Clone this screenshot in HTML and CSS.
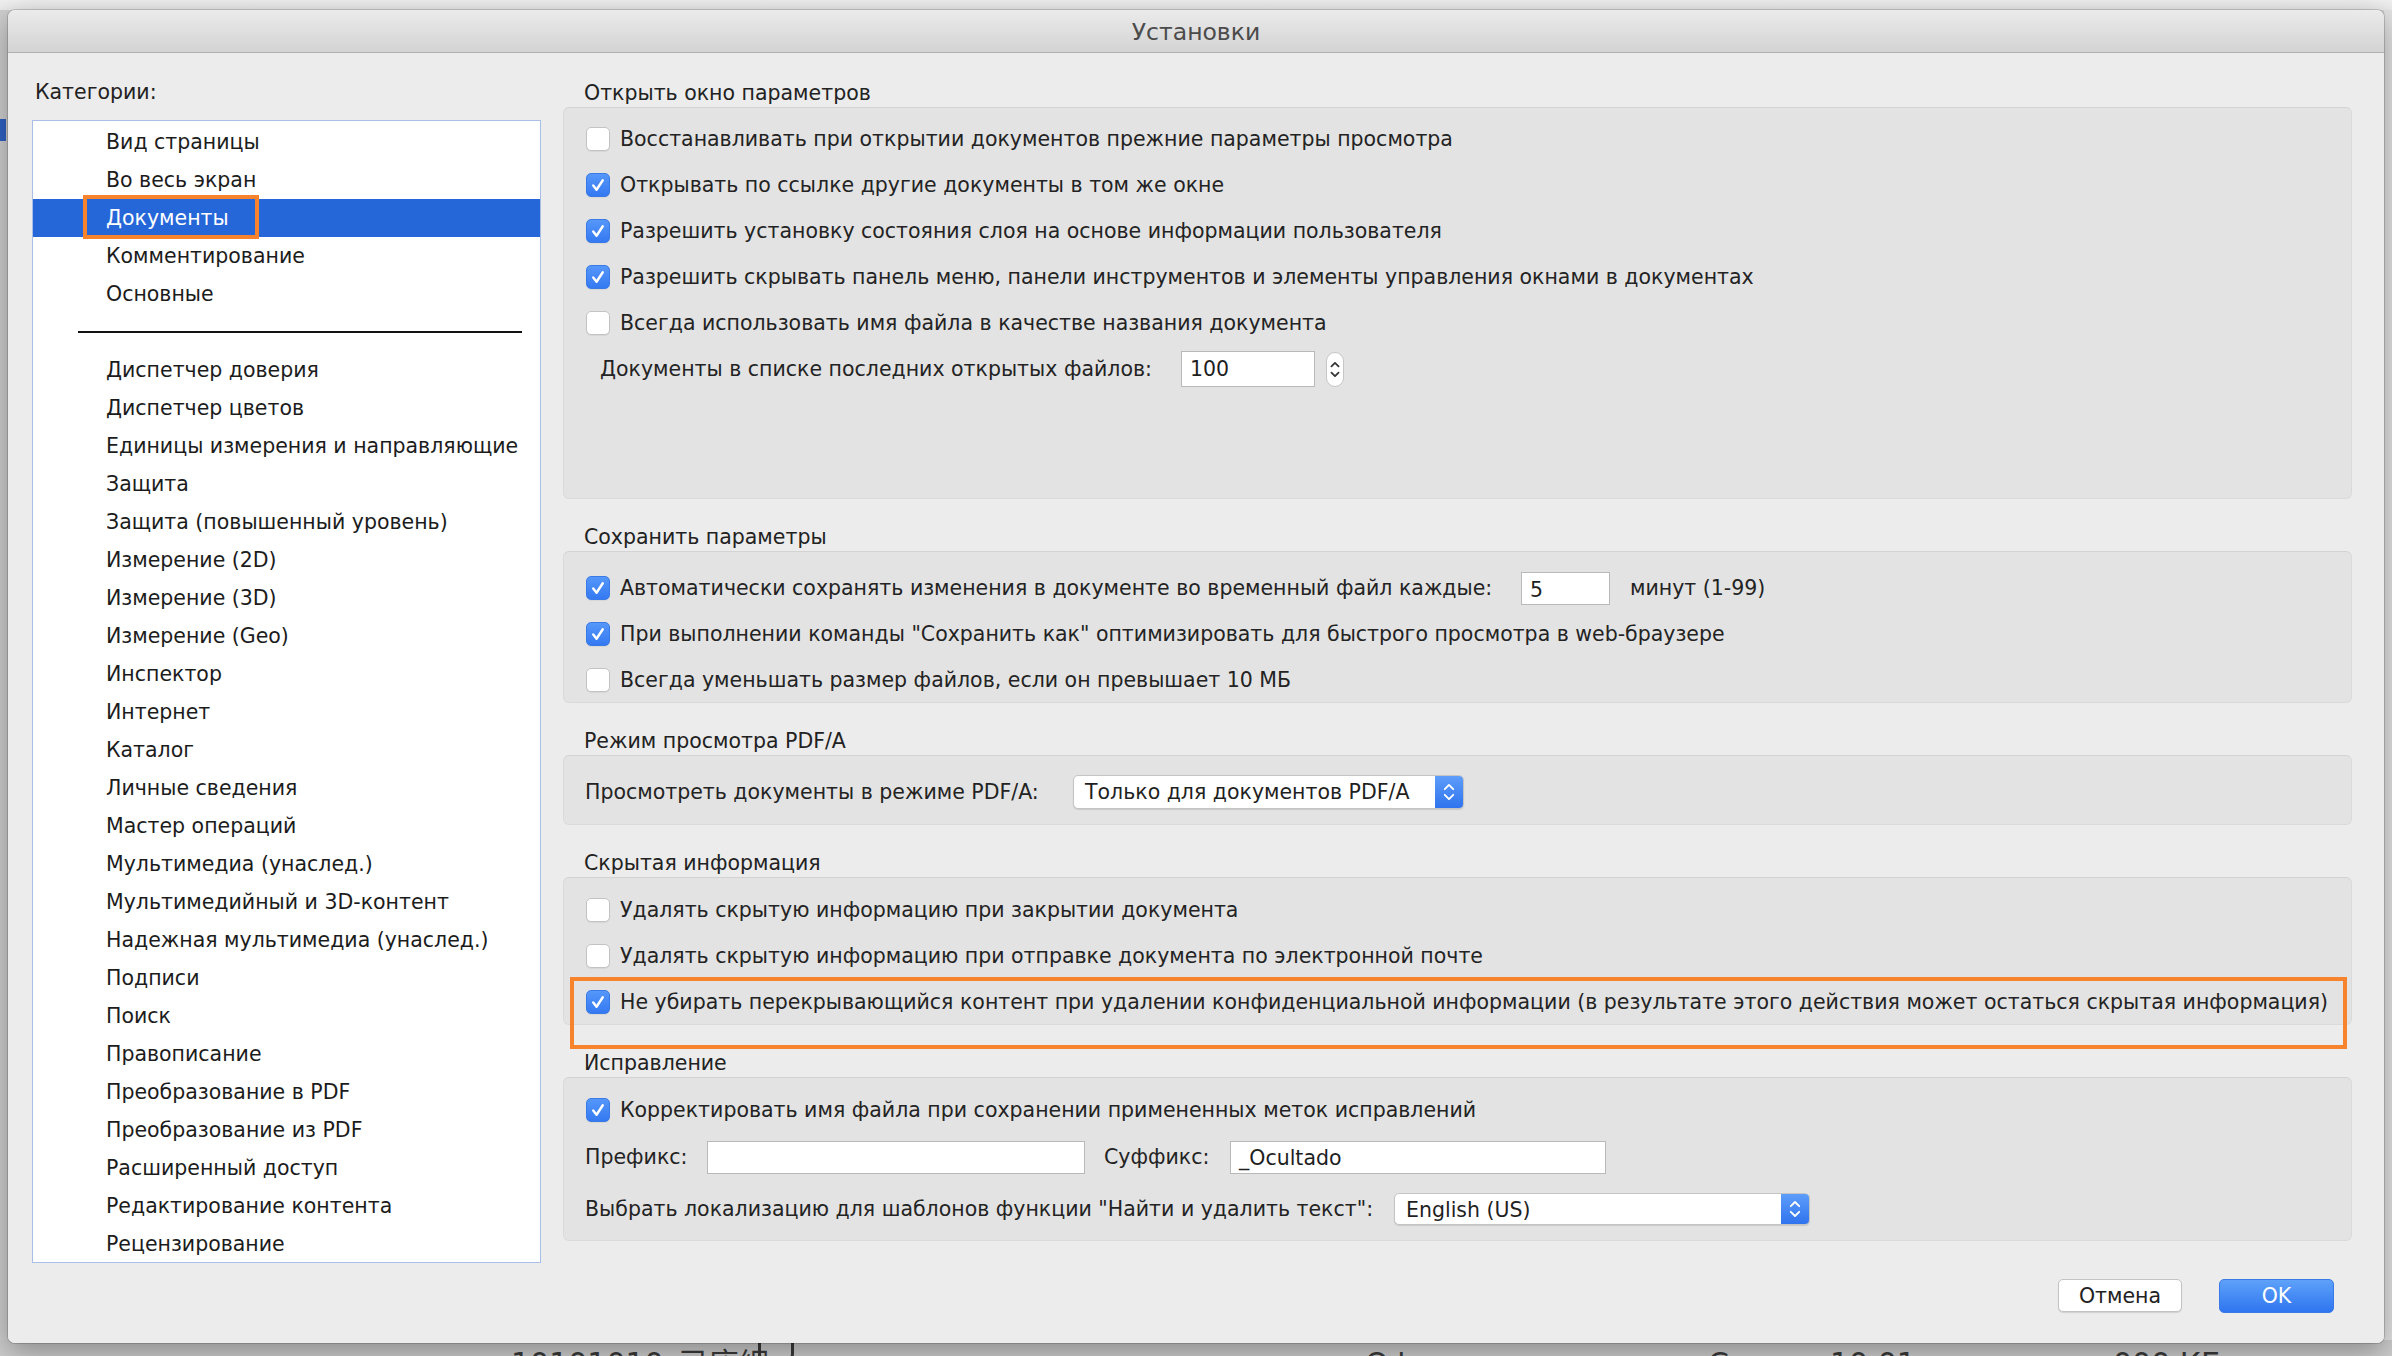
FILE: index.html
```html
<!DOCTYPE html>
<html lang="ru">
<head>
<meta charset="utf-8">
<title>Установки</title>
<link rel="stylesheet" href="styles.css">
</head>
<body>
<div class="desktop">
  <div class="bg-left"><span class="bg-chip"></span></div>
  <div class="bg-right"></div>
  <div class="bg-bottom">
    <span class="bg-name">10101010_已座細</span>
    <span class="bg-icon"></span>
    <span class="bg-c1">Оф</span>
    <span class="bg-c2">Сег</span>
    <span class="bg-c3">10.01</span>
    <span class="bg-c4">000 КБ</span>
  </div>

  <div class="dialog">
    <div class="titlebar">Установки</div>
    <div class="content">
      <div class="left">
        <div class="cat-label">Категории:</div>
        <div class="list">
          <div class="item">Вид страницы</div>
          <div class="item">Во весь экран</div>
          <div class="item selected">Документы<span class="hl"></span></div>
          <div class="item">Комментирование</div>
          <div class="item">Основные</div>
          <div class="sep"></div>
          <div class="item">Диспетчер доверия</div>
          <div class="item">Диспетчер цветов</div>
          <div class="item">Единицы измерения и направляющие</div>
          <div class="item">Защита</div>
          <div class="item">Защита (повышенный уровень)</div>
          <div class="item">Измерение (2D)</div>
          <div class="item">Измерение (3D)</div>
          <div class="item">Измерение (Geo)</div>
          <div class="item">Инспектор</div>
          <div class="item">Интернет</div>
          <div class="item">Каталог</div>
          <div class="item">Личные сведения</div>
          <div class="item">Мастер операций</div>
          <div class="item">Мультимедиа (унаслед.)</div>
          <div class="item">Мультимедийный и 3D-контент</div>
          <div class="item">Надежная мультимедиа (унаслед.)</div>
          <div class="item">Подписи</div>
          <div class="item">Поиск</div>
          <div class="item">Правописание</div>
          <div class="item">Преобразование в PDF</div>
          <div class="item">Преобразование из PDF</div>
          <div class="item">Расширенный доступ</div>
          <div class="item">Редактирование контента</div>
          <div class="item">Рецензирование</div>
        </div>
      </div>

      <div class="right">
        <section class="group">
          <div class="gtitle">Открыть окно параметров</div>
          <div class="gbox g1">
            <div class="row"><span class="cb"></span>Восстанавливать при открытии документов прежние параметры просмотра</div>
            <div class="row"><span class="cb on"><svg viewBox="0 0 24 24"><path d="M6.8 12.6l3.6 4.6 6.8-10.4"/></svg></span>Открывать по ссылке другие документы в том же окне</div>
            <div class="row"><span class="cb on"><svg viewBox="0 0 24 24"><path d="M6.8 12.6l3.6 4.6 6.8-10.4"/></svg></span>Разрешить установку состояния слоя на основе информации пользователя</div>
            <div class="row"><span class="cb on"><svg viewBox="0 0 24 24"><path d="M6.8 12.6l3.6 4.6 6.8-10.4"/></svg></span>Разрешить скрывать панель меню, панели инструментов и элементы управления окнами в документах</div>
            <div class="row"><span class="cb"></span>Всегда использовать имя файла в качестве названия документа</div>
            <div class="row row-indent">
              <span class="lbl lbl-recent">Документы в списке последних открытых файлов:</span>
              <span class="field f-recent">100</span>
              <span class="stepper"><svg viewBox="0 0 18 35"><path d="M5 14l4-4 4 4M5 21l4 4 4-4"/></svg></span>
            </div>
          </div>
        </section>

        <section class="group">
          <div class="gtitle">Сохранить параметры</div>
          <div class="gbox g2">
            <div class="row"><span class="cb on"><svg viewBox="0 0 24 24"><path d="M6.8 12.6l3.6 4.6 6.8-10.4"/></svg></span><span class="lbl lbl-auto">Автоматически сохранять изменения в документе во временный файл каждые:</span><span class="field f-min">5</span><span class="after">минут (1-99)</span></div>
            <div class="row"><span class="cb on"><svg viewBox="0 0 24 24"><path d="M6.8 12.6l3.6 4.6 6.8-10.4"/></svg></span>При выполнении команды "Сохранить как" оптимизировать для быстрого просмотра в web-браузере</div>
            <div class="row"><span class="cb"></span>Всегда уменьшать размер файлов, если он превышает 10 МБ</div>
          </div>
        </section>

        <section class="group">
          <div class="gtitle">Режим просмотра PDF/A</div>
          <div class="gbox g3">
            <div class="row row-plain">
              <span class="lbl lbl-pdfa">Просмотреть документы в режиме PDF/A:</span>
              <span class="select s-pdfa"><span class="sel-text">Только для документов PDF/A</span><span class="sel-btn"><svg viewBox="0 0 28 34"><path d="M9.5 14l4.5-4.5 4.5 4.5M9.5 20l4.5 4.5 4.5-4.5"/></svg></span></span>
            </div>
          </div>
        </section>

        <section class="group">
          <div class="gtitle">Скрытая информация</div>
          <div class="gbox g4">
            <div class="row"><span class="cb"></span>Удалять скрытую информацию при закрытии документа</div>
            <div class="row"><span class="cb"></span>Удалять скрытую информацию при отправке документа по электронной почте</div>
            <div class="row"><span class="cb on"><svg viewBox="0 0 24 24"><path d="M6.8 12.6l3.6 4.6 6.8-10.4"/></svg></span>Не убирать перекрывающийся контент при удалении конфиденциальной информации (в результате этого действия может остаться скрытая информация)</div>
          </div>
          <div class="hl-row"></div>
        </section>

        <section class="group">
          <div class="gtitle">Исправление</div>
          <div class="gbox g5">
            <div class="row"><span class="cb on"><svg viewBox="0 0 24 24"><path d="M6.8 12.6l3.6 4.6 6.8-10.4"/></svg></span>Корректировать имя файла при сохранении примененных меток исправлений</div>
            <div class="row row-plain r-fix2">
              <span class="lbl lbl-prefix">Префикс:</span>
              <span class="field f-prefix"></span>
              <span class="lbl lbl-suffix">Суффикс:</span>
              <span class="field f-suffix">_Ocultado</span>
            </div>
            <div class="row row-plain r-fix3">
              <span class="lbl lbl-loc">Выбрать локализацию для шаблонов функции "Найти и удалить текст":</span>
              <span class="select s-loc"><span class="sel-text">English (US)</span><span class="sel-btn"><svg viewBox="0 0 28 32"><path d="M9.5 13l4.5-4.5 4.5 4.5M9.5 19l4.5 4.5 4.5-4.5"/></svg></span></span>
            </div>
          </div>
        </section>

        <div class="buttons">
          <button class="btn btn-cancel" type="button">Отмена</button>
          <button class="btn btn-ok" type="button">OK</button>
        </div>
      </div>
    </div>
  </div>
</div>
</body>
</html>
```

FILE: styles.css
```css
* { box-sizing: border-box; }
html, body { margin: 0; padding: 0; }
body {
  width: 2392px;
  height: 1356px;
  overflow: hidden;
  font-family: "DejaVu Sans", "Liberation Sans", sans-serif;
  color: #222;
}

.desktop {
  position: relative;
  width: 2392px;
  height: 1356px;
  background: linear-gradient(#f1f1f1 0, #ebebeb 10px, #d4d4d4 10px);
  overflow: hidden;
}

/* background application peeking around the dialog */
.bg-left {
  position: absolute;
  left: 0; top: 10px;
  width: 8px; height: 1340px;
  background: #cfcfcf;
}
.bg-chip {
  position: absolute;
  left: 0; top: 109px;
  width: 6px; height: 22px;
  background: #2f62c4;
}
.bg-right {
  position: absolute;
  right: 0; top: 10px;
  width: 8px; height: 1340px;
  background: #e4e4e4;
}
.bg-bottom {
  position: absolute;
  left: 0; top: 1340px;
  width: 2392px; height: 16px;
  background: #cdcdcd;
  font-family: "DejaVu Sans", "Noto Sans CJK SC", sans-serif;
  font-size: 30px;
  color: #3a3a3a;
  line-height: 40px;
}
.bg-bottom span { position: absolute; top: 4px; }
.bg-name { left: 511px; }
.bg-icon {
  left: 758px; width: 36px; height: 24px;
  border: 3px solid #3a3a3a; border-radius: 6px;
  top: -4px !important;
}
.bg-c1 { left: 1365px; }
.bg-c2 { left: 1708px; }
.bg-c3 { left: 1830px; }
.bg-c4 { left: 2113px; }

/* dialog window */
.dialog {
  position: absolute;
  left: 8px; top: 10px;
  width: 2376px; height: 1333px;
  border-radius: 7px;
  background: #ececec;
  box-shadow: 0 0 0 1px rgba(0,0,0,0.16), 0 8px 30px rgba(0,0,0,0.35);
  overflow: hidden;
}
.titlebar {
  height: 43px;
  line-height: 44px;
  text-align: center;
  font-size: 23.5px;
  color: #4b4b4b;
  background: linear-gradient(#ebebeb, #d3d3d3);
  border-bottom: 1px solid #b0b0b0;
}
.content {
  display: flex;
  height: 1290px;
  background: #ececec;
}

/* categories */
.left {
  width: 533px;
  padding: 26px 0 0 24px;
  flex: none;
}
.cat-label {
  height: 26px;
  line-height: 26px;
  font-size: 20.5px;
  padding-left: 3px;
  margin-bottom: 15px;
  color: #222;
}
.list {
  width: 509px;
  height: 1143px;
  background: #fff;
  border: 1px solid #a9bfe7;
  padding-top: 2px;
}
.item {
  position: relative;
  height: 38px;
  line-height: 38px;
  padding-left: 73px;
  font-size: 20.5px;
  color: #1c1c1c;
  white-space: nowrap;
}
.item.selected {
  background: #2566d9;
  color: #fff;
}
.hl {
  position: absolute;
  left: 50px; top: -4px;
  width: 176px; height: 44px;
  border: 4px solid #f7842c;
}
.sep {
  position: relative;
  height: 38px;
}
.sep::before {
  content: "";
  position: absolute;
  left: 45px; top: 18px;
  width: 444px; height: 2px;
  background: #111;
}

/* right panel */
.right {
  width: 1789px;
  margin-left: 22px;
  padding-top: 27px;
  flex: none;
}
.group {
  position: relative;
  margin-bottom: 25px;
}
.gtitle {
  height: 26px;
  line-height: 26px;
  padding-left: 21px;
  font-size: 20.5px;
  color: #222;
}
.gbox {
  margin-top: 1px;
  background: #e3e3e3;
  border: 1px solid #dadada;
  border-top-color: #d3d3d3;
  border-radius: 6px;
}
.g1 { height: 392px; padding-top: 8px; }
.g2 { height: 152px; padding-top: 13px; }
.g3 { height: 70px; padding-top: 13px; }
.g4 { height: 148px; padding-top: 9px; }
.g5 { height: 164px; padding-top: 9px; }

.row {
  display: flex;
  align-items: center;
  height: 46px;
  padding-left: 22px;
  font-size: 20.5px;
  color: #232323;
  white-space: nowrap;
}
.row-indent { padding-left: 36px; }
.row-plain { padding-left: 21px; }
.r-fix2 { height: 48px; }
.r-fix3 { height: 56px; }

.cb {
  flex: none;
  width: 24px; height: 24px;
  margin-right: 10px;
  border-radius: 5px;
  background: #fff;
  border: 1px solid #c3c3c3;
  box-shadow: 0 1px 1px rgba(0,0,0,0.06);
}
.cb.on {
  background: linear-gradient(#5597fa, #3479f2);
  border-color: #3a7ae6;
}
.cb svg { display: block; width: 22px; height: 22px; }
.cb path { fill: none; stroke: #fff; stroke-width: 2.6; stroke-linecap: round; stroke-linejoin: round; }

.lbl { flex: none; }
.lbl-recent { width: 581px; }
.lbl-auto { width: 901px; }
.lbl-pdfa { width: 488px; }
.lbl-prefix { width: 122px; }
.lbl-suffix { width: 126px; margin-left: 19px; }
.lbl-loc { width: 809px; }

.field {
  flex: none;
  display: block;
  background: #fff;
  border: 1px solid #b9b9b9;
  font-size: 20.5px;
  color: #1f1f1f;
  padding-left: 8px;
}
.f-recent { width: 134px; height: 36px; line-height: 34px; }
.f-min { width: 89px; height: 33px; line-height: 34px; }
.f-prefix { width: 378px; height: 33px; }
.f-suffix { width: 376px; height: 33px; line-height: 33px; }
.after { margin-left: 20px; }

.stepper {
  flex: none;
  margin-left: 11px;
  width: 18px; height: 35px;
  background: #fff;
  border: 1px solid #c6c6c6;
  border-radius: 9px;
}
.stepper svg { display: block; width: 16px; height: 33px; }
.stepper path { fill: none; stroke: #333; stroke-width: 2; stroke-linecap: round; stroke-linejoin: round; }

.select {
  flex: none;
  display: flex;
  background: #fff;
  border: 1px solid #c4c4c4;
  border-radius: 5px;
  box-shadow: 0 1px 1px rgba(0,0,0,0.12);
  overflow: hidden;
}
.s-pdfa { width: 391px; height: 34px; }
.s-loc { width: 416px; height: 32px; }
.sel-text {
  flex: 1;
  padding-left: 11px;
  font-size: 20.5px;
  color: #1f1f1f;
  line-height: 32px;
}
.sel-btn {
  flex: none;
  width: 28px;
  background: linear-gradient(#5d9dfa, #2f73ee);
}
.sel-btn svg { display: block; width: 28px; height: 100%; }
.sel-btn path { fill: none; stroke: #fff; stroke-width: 2; stroke-linecap: round; stroke-linejoin: round; }

.hl-row {
  position: absolute;
  left: 7px; top: 127px;
  width: 1777px; height: 72px;
  border: 4px solid #f7842c;
}

.buttons {
  display: flex;
  justify-content: flex-end;
  padding-right: 18px;
  margin-top: 38px;
}
.btn {
  font-family: inherit;
  font-size: 20.5px;
  border-radius: 5px;
  padding: 0;
  margin: 0;
}
.btn-cancel {
  width: 124px; height: 33px;
  background: #fff;
  border: 1px solid #c3c3c3;
  color: #222;
  box-shadow: 0 1px 1px rgba(0,0,0,0.12);
  margin-right: 37px;
}
.btn-ok {
  width: 115px; height: 34px;
  background: linear-gradient(#5ea2fa, #2f75ef);
  border: 1px solid #3a7ae8;
  color: #fff;
}
```
